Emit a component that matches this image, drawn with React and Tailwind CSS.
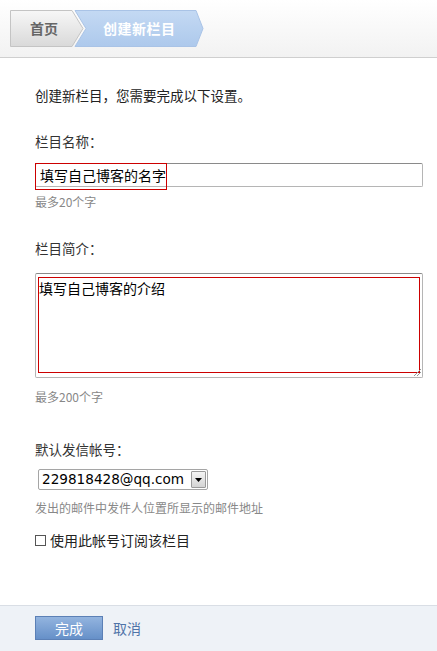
import React from "react";

const CN = { fontFamily: '"Noto Sans CJK SC", "Liberation Sans", sans-serif' };

export default function App() {
  return (
    <div className="w-[437px] h-[651px] flex flex-col bg-white text-[#222]" style={CN}>
      {/* Header */}
      <div className="h-[58px] shrink-0 border-b border-[#cfcfcf] bg-gradient-to-b from-white to-[#f2f2f2] pl-[10px] pt-[10px]">
        <div className="relative w-[200px] h-[37px]">
          <svg width="200" height="37" viewBox="0 0 200 37" className="absolute left-0 top-0">
            <defs>
              <linearGradient id="g1" x1="0" y1="0" x2="0" y2="1">
                <stop offset="0" stopColor="#f7f7f7" />
                <stop offset="1" stopColor="#d9d9d9" />
              </linearGradient>
              <linearGradient id="g2" x1="0" y1="0" x2="0" y2="1">
                <stop offset="0" stopColor="#c4d9f3" />
                <stop offset="1" stopColor="#adc9ec" />
              </linearGradient>
            </defs>
            <polygon points="0.5,0.5 62,0.5 73,18.5 62,36.5 0.5,36.5" fill="url(#g1)" stroke="#c4c4c4" />
            <polygon points="65,0.5 186,0.5 193,18.5 186,36.5 65,36.5 76,18.5" fill="url(#g2)" stroke="#a9c3e6" />
          </svg>
          <span className="absolute left-[20px] top-[9px] text-[14px] leading-[18px] font-bold text-[#666]">首页</span>
          <span className="absolute left-[93px] top-[9px] text-[14px] leading-[18px] font-bold text-white tracking-[0.5px]">创建新栏目</span>
        </div>
      </div>

      {/* Content */}
      <div className="flex-1 pl-[35px] pr-[14px]">
        <div className="mt-[27px] h-[20px] leading-[20px] text-[13.5px] text-[#222]">创建新栏目，您需要完成以下设置。</div>

        <div className="mt-[26px] h-[20px] leading-[20px] text-[13.5px] text-[#333]">栏目名称：</div>
        <div className="relative mt-[12px]">
          <div className="h-[24px] border border-[#b5b5b5] border-t-[#8a8a8a] rounded-[2px] bg-white pl-[4px] text-[14px] leading-[22px] text-black">
            填写自己博客的名字
          </div>
          <div className="absolute left-0 top-0 w-[132px] h-[27px] border border-[#cc0000]" />
        </div>
        <div className="mt-[7px] h-[16px] leading-[16px] text-[12px] text-[#888]">最多20个字</div>

        <div className="mt-[28px] h-[20px] leading-[20px] text-[13.5px] text-[#333]">栏目简介：</div>
        <div className="relative mt-[15px] h-[105px] border border-[#b5b5b5] border-t-[#8a8a8a] rounded-[2px] bg-white">
          <div className="pl-[3px] pt-[5px] text-[14px] leading-[18px] text-black">填写自己博客的介绍</div>
          <div className="absolute left-[2px] top-[3px] right-[2px] bottom-[4px] border border-[#cc0000]" />
          <svg width="8" height="8" viewBox="0 0 8 8" className="absolute right-[1px] bottom-[1px]">
            <line x1="1" y1="8" x2="8" y2="1" stroke="#999" />
            <line x1="4" y1="8" x2="8" y2="4" stroke="#999" />
          </svg>
        </div>
        <div className="mt-[11px] h-[16px] leading-[16px] text-[12px] text-[#888]">最多200个字</div>

        <div className="mt-[34px] h-[20px] leading-[20px] text-[13.5px] text-[#333]">默认发信帐号：</div>
        <div className="mt-[10px] ml-[3px] w-[170px] h-[21px] flex items-stretch border border-[#a5a5a5] rounded-[2px] bg-white">
          <div className="flex-1 min-w-0 overflow-hidden whitespace-nowrap pl-[3px] leading-[19px] text-black" style={{ fontFamily: '"DejaVu Sans", "Liberation Sans", sans-serif', fontSize: "13.6px" }}>
            229818428@qq.com
          </div>
          <div className="w-[15px] shrink-0 m-[1px] flex items-center justify-center bg-gradient-to-b from-[#f4f4f4] to-[#d4d4d4] border border-[#9a9a9a] rounded-[1px]">
            <svg width="7" height="4" viewBox="0 0 7 4"><polygon points="0,0 7,0 3.5,4" fill="#000" /></svg>
          </div>
        </div>
        <div className="mt-[10px] h-[16px] leading-[16px] text-[12px] text-[#888]">发出的邮件中发件人位置所显示的邮件地址</div>

        <div className="mt-[14px] h-[20px] flex items-center gap-[4px]">
          <div className="w-[11px] h-[11px] border border-[#555] bg-white" />
          <span className="text-[14px] leading-[20px] text-[#222]">使用此帐号订阅该栏目</span>
        </div>
      </div>

      {/* Footer */}
      <div className="h-[46px] shrink-0 border-t border-[#d9dee5] bg-[#eef2f7] pl-[35px] pt-[10px] flex items-start gap-[10px]">
        <div className="w-[68px] h-[24px] border border-[#5b80b6] bg-gradient-to-b from-[#93b4df] to-[#6690c8] text-white text-[14px] leading-[22px] text-center">
          完成
        </div>
        <div className="text-[14px] leading-[24px] text-[#4f74a8]">取消</div>
      </div>
    </div>
  );
}
